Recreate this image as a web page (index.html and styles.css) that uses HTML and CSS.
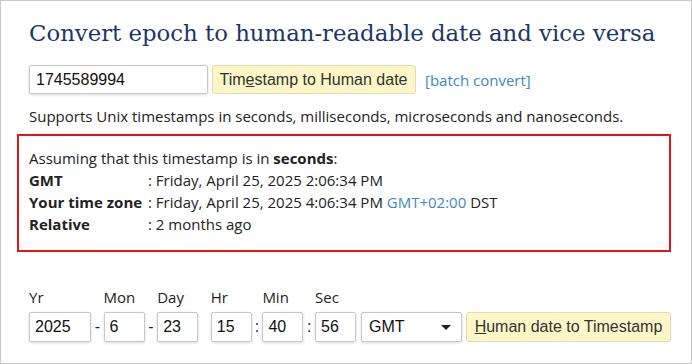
FILE: index.html
```html
<!DOCTYPE html>
<html>
<head>
<meta charset="utf-8">
<link rel="stylesheet" href="styles.css">
</head>
<body>
<div class="page">
  <h1 class="title">Convert epoch to human-readable date and vice versa</h1>
  <div class="row">
    <input class="ts-input" type="text" value="1745589994">
    <button class="btn btn-ts">Tim<u>e</u>stamp to Human date</button>
    <a class="link" href="#">[batch convert]</a>
  </div>
  <p class="note">Supports Unix timestamps in seconds, milliseconds, microseconds and nanoseconds.</p>
  <div class="result">
    <div class="intro">Assuming that this timestamp is in <b>seconds</b>:</div>
    <div class="line"><span class="lbl">GMT</span><span>: Friday, April 25, 2025 2:06:34 PM</span></div>
    <div class="line"><span class="lbl">Your time zone</span><span>: Friday, April 25, 2025 4:06:34 PM <a class="link" href="#">GMT+02:00</a> DST</span></div>
    <div class="line"><span class="lbl">Relative</span><span>: 2 months ago</span></div>
  </div>
  <div class="form">
    <div class="col"><span class="flbl">Yr</span><input class="num wide" type="text" value="2025"></div>
    <div class="sep"><span class="flbl">&nbsp;</span><span class="sepch">-</span></div>
    <div class="col"><span class="flbl">Mon</span><input class="num" type="text" value="6"></div>
    <div class="sep"><span class="flbl">&nbsp;</span><span class="sepch">-</span></div>
    <div class="col"><span class="flbl">Day</span><input class="num" type="text" value="23"></div>
    <div class="sep"><span class="flbl">&nbsp;</span><span class="sepch"></span></div>
    <div class="col"><span class="flbl">Hr</span><input class="num" type="text" value="15"></div>
    <div class="sep sep-c"><span class="flbl">&nbsp;</span><span class="sepch">:</span></div>
    <div class="col"><span class="flbl">Min</span><input class="num" type="text" value="40"></div>
    <div class="sep sep-c"><span class="flbl">&nbsp;</span><span class="sepch">:</span></div>
    <div class="col"><span class="flbl">Sec</span><input class="num" type="text" value="56"></div>
    <div class="col col-sel"><span class="flbl">&nbsp;</span><div class="select">GMT<span class="caret"></span></div></div>
    <div class="col col-btn"><span class="flbl">&nbsp;</span><button class="btn btn-hd"><u>H</u>uman date to Timestamp</button></div>
  </div>
</div>
</body>
</html>
```

FILE: styles.css
```css
* { box-sizing: border-box; }
html, body { margin: 0; padding: 0; background: #fff; }
.page {
  width: 692px;
  height: 364px;
  border: 1px solid #c9c9c9;
  padding: 17px 20px 0 28px;
  font-family: "Open Sans", sans-serif;
  font-size: 15px;
  color: #222;
  overflow: hidden;
}
.title {
  margin: 0;
  font-family: "DejaVu Serif", serif;
  font-weight: normal;
  font-size: 22.8px;
  line-height: 30px;
  color: #1b3768;
  white-space: nowrap;
}
.row {
  display: flex;
  align-items: center;
  margin-top: 17px;
  height: 29px;
}
.ts-input {
  width: 179px;
  height: 29px;
  border: 1px solid #c8c8c8;
  border-radius: 2px;
  box-shadow: 0 1px 3px rgba(0,0,0,0.15);
  padding: 0 6px;
  font-family: "Liberation Sans", Arial, sans-serif;
  font-size: 16px;
  color: #111;
}
.btn {
  height: 29px;
  background: #fdf7c8;
  border: 1px solid #e2dcae;
  border-radius: 3px;
  padding: 0 5px;
  font-family: "Liberation Sans", Arial, sans-serif;
  font-size: 16px;
  color: #333;
}
.btn-ts { margin-left: 4px; width: 204px; padding-left: 4px; }
.row .link { margin-left: 9px; }
.link { color: #3a8bbb; text-decoration: none; }
.note {
  margin: 11px 0 0;
  line-height: 22px;
}
.result {
  margin: 7px 0 0 -12px;
  width: 654px;
  border: 2px solid #e3141f;
  padding: 11px 10px 15px 10px;
}
.intro { line-height: 22px; white-space: nowrap; }
.line { line-height: 22px; display: flex; white-space: nowrap; }
.lbl { width: 119px; font-weight: bold; }
.form {
  display: flex;
  margin-top: 34px;
}
.col { display: flex; flex-direction: column; }
.flbl { line-height: 22px; height: 22px; margin-bottom: 4px; }
.num {
  width: 41px;
  height: 30px;
  border: 1px solid #c8c8c8;
  border-radius: 2px;
  box-shadow: 0 1px 3px rgba(0,0,0,0.15);
  padding: 0 5px;
  font-family: "Liberation Sans", Arial, sans-serif;
  font-size: 16px;
  color: #111;
}
.num.wide { width: 62px; }
.sep { display: flex; flex-direction: column; width: 13px; }
.sep-c { width: 11px; }
.sep-c + .col + .sep-c { width: 12px; }
.sepch {
  height: 30px;
  line-height: 30px;
  text-align: center;
  font-family: "Liberation Sans", Arial, sans-serif;
  font-size: 16px;
}
.col-sel { margin-left: 5px; }
.select {
  position: relative;
  width: 101px;
  height: 30px;
  border: 1px solid #c8c8c8;
  border-radius: 2px;
  box-shadow: 0 1px 3px rgba(0,0,0,0.15);
  padding: 0 7px;
  line-height: 28px;
  font-family: "Liberation Sans", Arial, sans-serif;
  font-size: 16px;
  color: #111;
}
.caret {
  position: absolute;
  right: 10px;
  top: 12px;
  width: 0;
  height: 0;
  border-left: 5px solid transparent;
  border-right: 5px solid transparent;
  border-top: 5px solid #222;
}
.col-btn { margin-left: 4px; }
.btn-hd { width: 205px; height: 30px; padding: 0 5px; }
```
